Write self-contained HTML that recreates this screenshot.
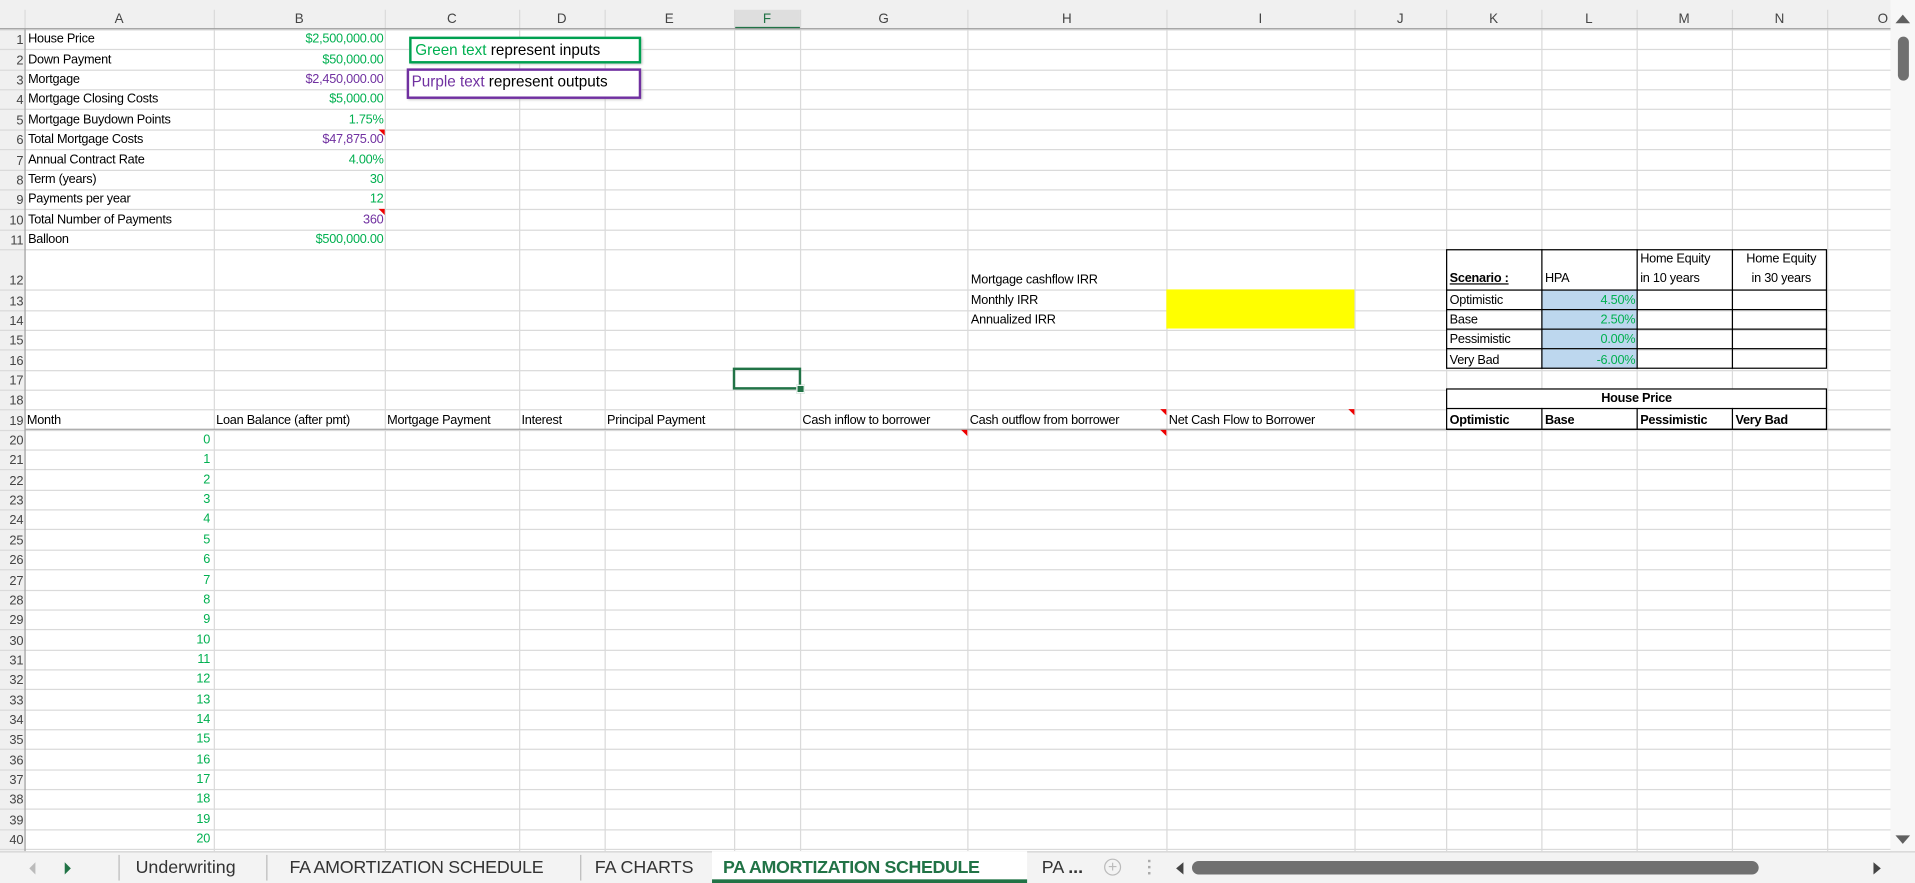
<!DOCTYPE html>
<html><head><meta charset="utf-8">
<style>
html,body{margin:0;padding:0;width:1915px;height:883px;overflow:hidden;background:#fff}
#w{position:absolute;left:0;top:0;width:1568px;height:723px;transform:scale(1.2213);transform-origin:0 0;background:#fff;font-family:"Liberation Sans",sans-serif;overflow:hidden}
.a{position:absolute}
.t{position:absolute;font-size:10.4px;line-height:16px;white-space:nowrap;color:#000;letter-spacing:-0.2px}
.r{text-align:right}
.g{color:#00b050}.p{color:#7030a0}
.vl{position:absolute;width:1px;background:#dadada}
.hl{position:absolute;height:1px;background:#dadada}
.ch{position:absolute;top:8px;height:16px;line-height:16px;text-align:center;font-size:11px;color:#444}
.rn{position:absolute;left:0;width:19px;text-align:right;font-size:10.5px;color:#444}
.tri{position:absolute;width:0;height:0;border-top:5px solid #e00;border-left:5px solid transparent}
.tab{position:absolute;top:700px;font-size:14.6px;color:#333;line-height:22px}
</style></head><body>
<div id="w">
<div class="a" style="left:0;top:0;width:1548px;height:24px;background:#f0f0f0"></div>
<div class="a" style="left:0;top:24px;width:20px;height:673px;background:#f0f0f0"></div>
<div class="a" style="left:601px;top:8px;width:54px;height:16px;background:#dedede;border-bottom:2px solid #217346;box-sizing:border-box"></div>
<div id="g"></div>
<div class="a" style="left:0;top:23px;width:1548px;height:1px;background:#a0a0a0"></div>
<div class="a" style="left:20px;top:24px;width:1px;height:673px;background:#a0a0a0"></div>
<div class="a" style="left:20px;top:351px;width:1528px;height:1px;background:#a6a6a6"></div>

<div class="a" style="left:955px;top:237px;width:154px;height:32px;background:#ffff00"></div>
<div class="a" style="left:1262px;top:237px;width:78px;height:65px;background:#bdd7ee"></div>
<div class="a" style="left:1184px;top:204px;width:312px;height:98px;border:1px solid #000;box-sizing:border-box"></div>
<div class="a" style="left:1184px;top:237px;width:312px;height:1px;background:#000"></div>
<div class="a" style="left:1184px;top:253px;width:312px;height:1px;background:#000"></div>
<div class="a" style="left:1184px;top:269px;width:312px;height:1px;background:#000"></div>
<div class="a" style="left:1184px;top:285px;width:312px;height:1px;background:#000"></div>
<div class="a" style="left:1262px;top:204px;width:1px;height:98px;background:#000"></div>
<div class="a" style="left:1340px;top:204px;width:1px;height:98px;background:#000"></div>
<div class="a" style="left:1418px;top:204px;width:1px;height:98px;background:#000"></div>
<div class="a" style="left:1184px;top:318px;width:312px;height:34px;border:1px solid #000;box-sizing:border-box;background:#fff"></div>
<div class="a" style="left:1184px;top:334px;width:312px;height:1px;background:#000"></div>
<div class="a" style="left:1262px;top:334px;width:1px;height:17px;background:#000"></div>
<div class="a" style="left:1340px;top:334px;width:1px;height:17px;background:#000"></div>
<div class="a" style="left:1418px;top:334px;width:1px;height:17px;background:#000"></div>
<div class="a" style="left:1184px;top:351px;width:312px;height:1px;background:#000"></div>

<div id="c"></div>

<div class="a" style="left:335px;top:30px;width:190px;height:22px;border:2px solid #00a050;box-sizing:border-box;background:#fff;font-size:12.5px;line-height:18px;padding-left:3px;box-shadow:1px 1px 2px #bbb"><span class="g">Green text</span> represent inputs</div>
<div class="a" style="left:333px;top:56px;width:192px;height:25px;border:2px solid #7030a0;box-sizing:border-box;background:#fff;font-size:12.5px;line-height:19px;padding-left:2px;box-shadow:1px 1px 2px #bbb"><span class="p">Purple text</span> represent outputs</div>

<div class="a" style="left:600px;top:301px;width:56px;height:18px;border:2px solid #217346;box-sizing:border-box"></div>
<div class="a" style="left:652px;top:315px;width:5px;height:5px;background:#217346;border:1px solid #fff"></div>

<div class="a" style="left:1548px;top:0;width:20px;height:697px;background:#f7f7f7"></div>
<div class="a" style="left:1552px;top:12px;width:0;height:0;border-left:6px solid transparent;border-right:6px solid transparent;border-bottom:7px solid #606060"></div>
<div class="a" style="left:1554px;top:30px;width:9px;height:36px;border-radius:5px;background:#707070"></div>
<div class="a" style="left:1552px;top:684px;width:0;height:0;border-left:6px solid transparent;border-right:6px solid transparent;border-top:7px solid #606060"></div>

<div class="a" style="left:0;top:697px;width:1568px;height:26px;background:#f3f3f3;border-top:1px solid #d0d0d0;box-sizing:border-box"></div>
<div class="a" style="left:24px;top:706px;width:0;height:0;border-top:5px solid transparent;border-bottom:5px solid transparent;border-right:5px solid #bbb"></div>
<div class="a" style="left:53px;top:706px;width:0;height:0;border-top:5px solid transparent;border-bottom:5px solid transparent;border-left:5px solid #217346"></div>
<div class="a" style="left:97px;top:700px;width:1px;height:21px;background:#bbb"></div>
<div class="a" style="left:218px;top:700px;width:1px;height:21px;background:#bbb"></div>
<div class="a" style="left:475px;top:700px;width:1px;height:21px;background:#bbb"></div>
<div class="a" style="left:583px;top:697px;width:258px;height:26px;background:#fff;border-bottom:3px solid #217346;box-sizing:border-box"></div>
<div class="tab" style="left:111px">Underwriting</div>
<div class="tab" style="left:237px;letter-spacing:-0.2px">FA AMORTIZATION SCHEDULE</div>
<div class="tab" style="left:487px">FA CHARTS</div>
<div class="tab" style="left:592px;color:#217346;font-weight:bold;letter-spacing:-0.3px">PA AMORTIZATION SCHEDULE</div>
<div class="tab" style="left:853px">PA <b>...</b></div>
<div class="a" style="left:904px;top:703px;width:14px;height:14px;border:1px solid #bbb;border-radius:50%;box-sizing:border-box;color:#bbb;font-size:13px;line-height:11px;text-align:center">+</div>
<div class="a" style="left:940px;top:704px;width:2px;height:2px;background:#aaa;box-shadow:0 5px #aaa,0 10px #aaa"></div>
<div class="a" style="left:963px;top:706px;width:0;height:0;border-top:5px solid transparent;border-bottom:5px solid transparent;border-right:6px solid #444"></div>
<div class="a" style="left:976px;top:705px;width:464px;height:11px;border-radius:6px;background:#707070"></div>
<div class="a" style="left:1534px;top:706px;width:0;height:0;border-top:5px solid transparent;border-bottom:5px solid transparent;border-left:6px solid #444"></div>
</div>
<script>
var cols=[20,175,315,425,495,601,655,792,955,1109,1184,1262,1340,1418,1496,1548];
var L="ABCDEFGHIJKLMNO";
var tops=[];
for(var n=1;n<=11;n++)tops[n]=24+(n-1)*16.35;
tops[12]=204.2;
for(var n=13;n<=41;n++)tops[n]=237.2+(n-13)*16.35;
var h="";
for(var i=0;i<cols.length;i++){h+='<div class="vl" style="left:'+cols[i]+'px;top:8px;height:689px"></div>';}
for(var n=1;n<=41;n++){h+='<div class="hl" style="left:0;top:'+tops[n].toFixed(1)+'px;width:1548px"></div>';}
for(var i=0;i<15;i++){var w=cols[i+1]-cols[i];h+='<div class="ch" style="left:'+cols[i]+'px;width:'+w+'px;'+(i==14?'text-align:right;width:50px':'')+(i==5?'color:#217346':'')+'">'+L[i]+'</div>';}
for(var n=1;n<=40;n++){var y=tops[n+1]-15;h+='<div class="rn t" style="top:'+y.toFixed(1)+'px">'+n+'</div>';}
document.getElementById('g').innerHTML=h;
var c="";
var DY=1.5;
function T(col,row,txt,cls,extra){var x=cols[col];var w=cols[col+1]-cols[col];var y=tops[row+1]-16.5+DY;
 c+='<div class="t '+(cls||'')+'" style="left:'+(x+3)+'px;width:'+(w-6)+'px;top:'+y.toFixed(1)+'px;'+(extra||'')+'">'+txt+'</div>';}
var A=["House Price","Down Payment","Mortgage","Mortgage Closing Costs","Mortgage Buydown Points","Total Mortgage Costs","Annual Contract Rate","Term (years)","Payments per year","Total Number of Payments","Balloon"];
var B=[["$2,500,000.00","g"],["$50,000.00","g"],["$2,450,000.00","p"],["$5,000.00","g"],["1.75%","g"],["$47,875.00","p"],["4.00%","g"],["30","g"],["12","g"],["360","p"],["$500,000.00","g"]];
for(var i=0;i<11;i++){T(0,i+1,A[i]);T(1,i+1,B[i][0],'r '+B[i][1],'left:'+(cols[1]+1)+'px;width:'+(cols[2]-cols[1]-2)+'px');}
T(7,12,"Mortgage cashflow IRR");T(7,13,"Monthly IRR");T(7,14,"Annualized IRR");
c+='<div class="t" style="left:1187px;top:221px;text-decoration:underline;font-weight:bold">Scenario :</div>';
c+='<div class="t" style="left:1265px;top:221px">HPA</div>';
c+='<div class="t" style="left:1343px;top:205px">Home Equity</div><div class="t" style="left:1343px;top:221px">in 10 years</div>';
c+='<div class="t" style="left:1421px;top:205px;width:75px;text-align:center">Home Equity</div><div class="t" style="left:1421px;top:221px;width:75px;text-align:center">in 30 years</div>';
var S=["Optimistic","Base","Pessimistic","Very Bad"],V=["4.50%","2.50%","0.00%","-6.00%"];
for(var i=0;i<4;i++){T(10,13+i,S[i]);T(11,13+i,V[i],'r g','left:1263px;width:76px');}
c+='<div class="t" style="left:1184px;width:312px;text-align:center;top:319px;font-weight:bold">House Price</div>';
var H=["Optimistic","Base","Pessimistic","Very Bad"];
for(var i=0;i<4;i++)T(10+i,19,H[i],'','font-weight:bold');
var R=["Month","Loan Balance (after pmt)","Mortgage Payment","Interest","Principal Payment","","Cash inflow to borrower","Cash outflow from borrower","Net Cash Flow to Borrower"];
for(var i=0;i<R.length;i++)if(R[i])T(i,19,R[i],'','width:auto;left:'+(cols[i]+2)+'px');
for(var n=0;n<=20;n++)T(0,20+n,String(n),'r g');
function tri(x,y){c+='<div class="tri" style="left:'+(x-5)+'px;top:'+(y)+'px"></div>';}
tri(315,106);tri(315,171);tri(792,352);tri(955,335);tri(955,352);tri(1109,335);
document.getElementById('c').innerHTML=c;
</script>
</body></html>
